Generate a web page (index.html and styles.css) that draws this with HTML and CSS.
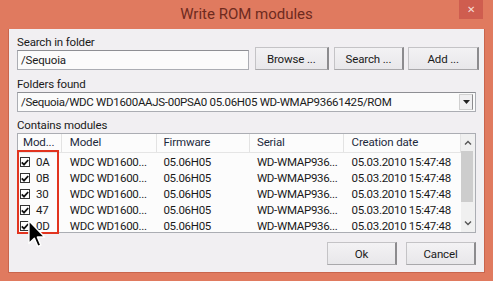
FILE: index.html
```html
<!DOCTYPE html>
<html lang="en">
<head>
    <meta charset="UTF-8">
    <title>Write ROM modules</title>
    <link rel="stylesheet" href="styles.css">
</head>
<body>
    <div class="window">
        <div class="titlebar">
            <span class="title">Write ROM modules</span>
            <span class="close">&#x2715;</span>
        </div>
        <div class="client">
            <div class="search-row">
                <div class="search-field">
                    <label class="label">Search in folder</label>
                    <div class="input">/Sequoia</div>
                </div>
                <button class="btn btn-browse">Browse ...</button>
                <button class="btn btn-search">Search ...</button>
                <button class="btn btn-add">Add ...</button>
            </div>

            <label class="label label-gap">Folders found</label>
            <div class="combo">
                <span class="combo-text">/Sequoia/WDC WD1600AAJS-00PSA0 05.06H05 WD-WMAP93661425/ROM</span>
                <span class="combo-arrow">
                    <svg width="7" height="4" viewBox="0 0 7 4"><path d="M0 0h7L3.5 4z" fill="#222"/></svg>
                </span>
            </div>

            <label class="label label-gap2">Contains modules</label>
            <div class="listview">
                <div class="list-body">
                    <div class="list-header">
                        <div class="col c1">Mod...</div>
                        <div class="col c2">Model</div>
                        <div class="col c3">Firmware</div>
                        <div class="col c4">Serial</div>
                        <div class="col c5">Creation date</div>
                    </div>
                    <div id="rows"></div>
                </div>
                <div class="scrollbar">
                    <div class="sb-arrow">
                        <svg width="8" height="5" viewBox="0 0 8 5"><path d="M1 4.5L4 1.5L7 4.5" fill="none" stroke="#555" stroke-width="1.4"/></svg>
                    </div>
                    <div class="sb-thumb"></div>
                    <div class="sb-track"></div>
                    <div class="sb-arrow">
                        <svg width="8" height="5" viewBox="0 0 8 5"><path d="M1 0.5L4 3.5L7 0.5" fill="none" stroke="#555" stroke-width="1.4"/></svg>
                    </div>
                </div>
                <div class="highlight"></div>
                <svg class="cursor" width="18" height="28" viewBox="0 0 12 19">
                    <path d="M0.5 0.5V16L4.2 12.4L6.6 18L8.6 17.1L6.3 11.6H11.2Z" fill="#000" stroke="#fff" stroke-width="1" stroke-linejoin="round"/>
                </svg>
            </div>

            <div class="footer">
                <button class="btn btn-ok">Ok</button>
                <button class="btn btn-cancel">Cancel</button>
            </div>
        </div>
    </div>

    <script>
        var modules = ["0A", "0B", "30", "47", "0D"];
        var html = "";
        for (var i = 0; i < modules.length; i++) {
            html += '<div class="row">' +
                '<div class="col c1"><span class="check"><svg width="8" height="7" viewBox="0 0 8 7"><path d="M0.8 3.4L3 5.6L7.2 1" fill="none" stroke="#111" stroke-width="1.8"/></svg></span>' + modules[i] + '</div>' +
                '<div class="col c2">WDC WD1600...</div>' +
                '<div class="col c3">05.06H05</div>' +
                '<div class="col c4">WD-WMAP936...</div>' +
                '<div class="col c5">05.03.2010 15:47:48</div>' +
                '</div>';
        }
        document.getElementById('rows').innerHTML = html;
    </script>
</body>
</html>
```

FILE: styles.css
```css
body {
    margin: 0;
    padding: 0;
    background-color: #e07a5f;
    font-family: Roboto, "Noto Sans", sans-serif;
    font-size: 11.5px;
    letter-spacing: -0.15px;
    color: #1a1a1a;
}
.window {
    width: 493px;
    height: 281px;
    overflow: hidden;
}
.titlebar {
    position: relative;
    height: 29px;
    display: flex;
    align-items: center;
    justify-content: center;
}
.title {
    font-size: 15px;
    letter-spacing: 0;
    color: #6e2a1e;
    margin-top: -1px;
}
.close {
    position: absolute;
    right: 10px;
    top: 0;
    width: 24px;
    height: 19px;
    background-color: #cf5d4f;
    color: #f6ddd8;
    font-size: 10px;
    display: flex;
    align-items: center;
    justify-content: center;
}
.client {
    margin: 0 8px;
    height: 244px;
    box-sizing: border-box;
    padding: 5px 8px 7px 8px;
    background-color: #f1eff2;
    border: 1px solid #c9654d;
    border-top: none;
    display: flex;
    flex-direction: column;
}
.label {
    display: block;
    height: 16px;
    line-height: 16px;
}
.label-gap {
    margin-top: 6px;
}
.label-gap2 {
    margin-top: 5px;
}
.search-row {
    display: flex;
    align-items: flex-end;
    margin-right: -3px;
}
.search-field {
    width: 233px;
    margin-right: 6px;
}
.input {
    height: 20px;
    box-sizing: border-box;
    border: 1px solid #abadb3;
    border-top-color: #8e8f94;
    background: #fbfbfb;
    padding-left: 3px;
    line-height: 18px;
}
.btn {
    height: 23px;
    box-sizing: border-box;
    font-family: inherit;
    font-size: 11.5px;
    letter-spacing: -0.15px;
    color: #1a1a1a;
    background: linear-gradient(#f3f2f4, #e8e7ea);
    border: 1px solid #c4c3c6;
    border-right: 2px solid #8c8b8e;
    border-bottom-color: #a9a8ab;
    padding: 0;
}
.btn-browse {
    width: 74px;
}
.btn-search {
    width: 71px;
    margin-left: 5px;
}
.btn-add {
    width: 71px;
    margin-left: 4px;
}
.combo {
    height: 20px;
    box-sizing: border-box;
    border: 1px solid #abadb3;
    border-top-color: #8e8f94;
    background: #fbfbfb;
    display: flex;
    align-items: center;
}
.combo-text {
    flex: 1;
    padding-left: 3px;
    white-space: nowrap;
    letter-spacing: -0.3px;
}
.combo-arrow {
    width: 14px;
    height: 16px;
    margin-right: 2px;
    border: 1px solid #d0d0d0;
    border-right-color: #8c8b8e;
    background: #f0eff1;
    box-sizing: border-box;
    display: flex;
    align-items: center;
    justify-content: center;
}
.listview {
    position: relative;
    height: 100px;
    box-sizing: border-box;
    border: 1px solid #abadb3;
    background: #fcfcfc;
    display: flex;
}
.list-body {
    flex: 1;
    overflow: hidden;
}
.list-header {
    display: flex;
    height: 19px;
    box-sizing: border-box;
    border-bottom: 1px solid #e5e5e5;
    margin-bottom: 1px;
}
.list-header .col {
    line-height: 17px;
    border-right: 1px solid #e3e3e3;
    color: #1c2a3c;
}
.row {
    display: flex;
    height: 16px;
    line-height: 16px;
    letter-spacing: -0.3px;
}
.col {
    box-sizing: border-box;
    white-space: nowrap;
    overflow: hidden;
}
.c1 {
    width: 44px;
    padding-left: 5px;
}
.row .c1 {
    padding-left: 2px;
    display: flex;
    align-items: center;
}
.c2 {
    width: 96px;
    padding-left: 8px;
}
.c3 {
    width: 93px;
    padding-left: 6px;
}
.c4 {
    width: 94px;
    padding-left: 7px;
}
.c5 {
    width: 118px;
    padding-left: 8px;
}
.check {
    width: 10px;
    height: 10px;
    box-sizing: border-box;
    border: 1px solid #333;
    background: #fff;
    margin-right: 6px;
    display: flex;
    align-items: center;
    justify-content: center;
}
.scrollbar {
    width: 14px;
    display: flex;
    flex-direction: column;
    background: #f0f0f0;
}
.sb-arrow {
    height: 17px;
    display: flex;
    align-items: center;
    justify-content: center;
}
.sb-thumb {
    height: 51px;
    margin: 0 2px 0 0;
    background: #cdcdcd;
}
.sb-track {
    flex: 1;
}
.highlight {
    position: absolute;
    left: -1px;
    top: 16px;
    width: 42px;
    height: 84px;
    box-sizing: border-box;
    border: 2px solid #e2341f;
}
.cursor {
    position: absolute;
    left: 10px;
    top: 86px;
}
.footer {
    display: flex;
    justify-content: flex-end;
    margin-top: auto;
}
.btn-ok {
    width: 70px;
}
.btn-cancel {
    width: 70px;
    margin-left: 9px;
}
```
